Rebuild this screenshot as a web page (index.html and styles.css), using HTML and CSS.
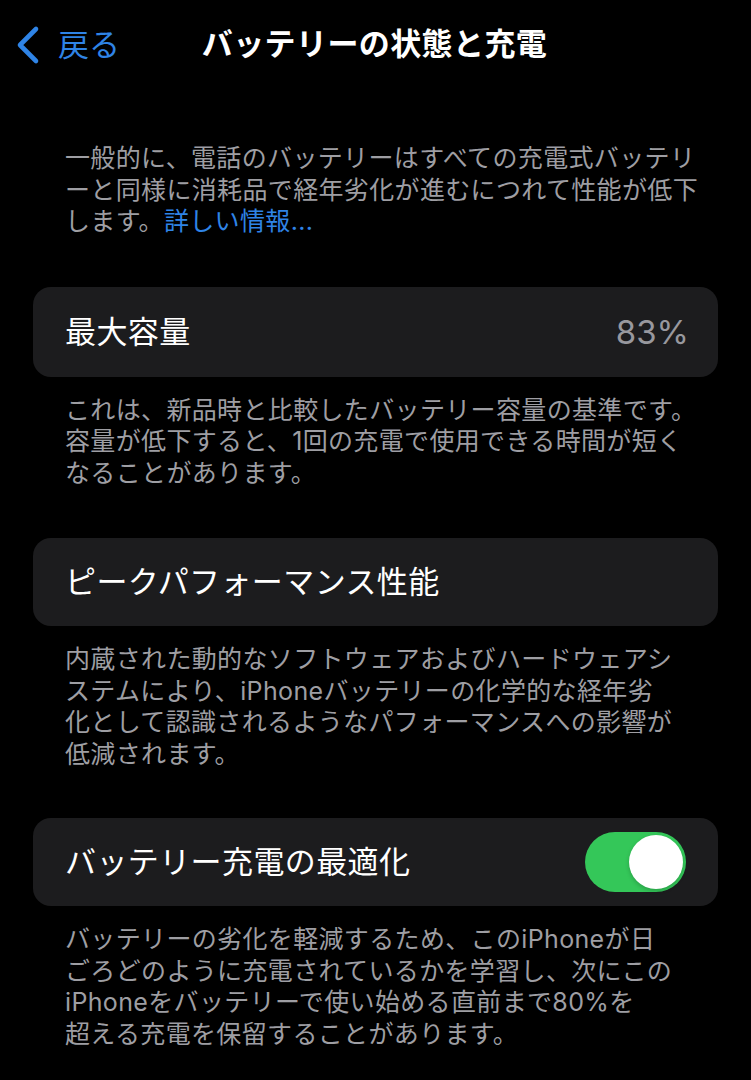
FILE: index.html
```html
<!DOCTYPE html>
<html lang="ja">
<head>
<meta charset="utf-8">
<title>バッテリーの状態と充電</title>
<link rel="stylesheet" href="styles.css">
</head>
<body>
<div class="screen">
  <header class="nav">
    <a class="back" href="#">
      <svg class="chev" width="26" height="40" viewBox="0 0 26 40" aria-hidden="true">
        <path d="M22 4 L6 20 L22 36" fill="none" stroke="currentColor" stroke-width="4.6" stroke-linecap="round" stroke-linejoin="round"/>
      </svg>
      <span>戻る</span>
    </a>
    <h1 class="title">バッテリーの状態と充電</h1>
  </header>

  <p class="note intro"><span class="ln">一般的に、電話のバッテリーはすべての充電式バッテリ</span><span class="ln">ーと同様に消耗品で経年劣化が進むにつれて性能が低下</span><span class="ln">します。<a class="link" href="#">詳しい情報...</a></span></p>

  <section class="group">
    <div class="card">
      <span class="label">最大容量</span>
      <span class="value">83%</span>
    </div>
    <p class="note"><span class="ln">これは、新品時と比較したバッテリー容量の基準です。</span><span class="ln">容量が低下すると、1回の充電で使用できる時間が短く</span><span class="ln">なることがあります。</span></p>
  </section>

  <section class="group">
    <div class="card">
      <span class="label">ピークパフォーマンス性能</span>
    </div>
    <p class="note"><span class="ln">内蔵された動的なソフトウェアおよびハードウェアシ</span><span class="ln">ステムにより、iPhoneバッテリーの化学的な経年劣</span><span class="ln">化として認識されるようなパフォーマンスへの影響が</span><span class="ln">低減されます。</span></p>
  </section>

  <section class="group last">
    <div class="card">
      <span class="label">バッテリー充電の最適化</span>
      <span class="toggle on"><span class="knob"></span></span>
    </div>
    <p class="note"><span class="ln">バッテリーの劣化を軽減するため、このiPhoneが日</span><span class="ln">ごろどのように充電されているかを学習し、次にこの</span><span class="ln">iPhoneをバッテリーで使い始める直前まで80%を</span><span class="ln">超える充電を保留することがあります。</span></p>
  </section>
</div>
</body>
</html>
```

FILE: styles.css
```css
* { box-sizing: border-box; }

html, body {
  margin: 0;
  padding: 0;
  background: #000;
}

body {
  font-family: Inter, "Noto Sans CJK JP", sans-serif;
  color: #fff;
  width: 751px;
  height: 1080px;
  overflow: hidden;
}

.screen {
  padding: 0 33px;
}

.nav {
  position: relative;
  height: 90px;
  display: flex;
  align-items: center;
  justify-content: center;
  margin: 0 -33px;
}

.back {
  position: absolute;
  left: 14px;
  top: 25px;
  display: flex;
  align-items: center;
  gap: 18px;
  color: #2f84e6;
  text-decoration: none;
  font-size: 31px;
  line-height: 40px;
}

.chev { display: block; }

.title {
  margin: -3px 0 0 -2px;
  font-size: 31px;
  font-weight: 700;
  line-height: 40px;
  letter-spacing: 0.4px;
}

.note {
  margin: 0;
  padding: 0 0 0 32px;
  font-size: 25px;
  line-height: 31.5px;
  color: #9e9ea3;
  letter-spacing: 0.35px;
  white-space: nowrap;
}

.ln {
  display: block;
  height: 31.5px;
  padding-top: 1px;
}

.intro {
  margin-top: 52px;
}

.link {
  color: #2f84e6;
  text-decoration: none;
}

.group {
  margin-top: 50px;
}

.group.last {
  margin-top: 49px;
}

.card {
  background: #1c1c1e;
  border-radius: 18px;
  height: 88px;
  padding: 0 32px;
  display: flex;
  align-items: center;
  justify-content: space-between;
}

.group:first-of-type .card { height: 90px; }

.label {
  font-size: 31px;
  line-height: 40px;
  color: #fff;
  letter-spacing: 0.4px;
}

.value {
  font-size: 33px;
  line-height: 40px;
  color: #98989e;
  margin-right: -3px;
}

.card + .note {
  margin-top: 17px;
}

.toggle {
  width: 101px;
  height: 60px;
  border-radius: 30px;
  background: #34c759;
  display: flex;
  align-items: center;
  justify-content: flex-end;
  padding: 3px;
}

.knob {
  width: 54px;
  height: 54px;
  border-radius: 50%;
  background: #fff;
  box-shadow: 0 2px 4px rgba(0,0,0,0.2);
}
```
